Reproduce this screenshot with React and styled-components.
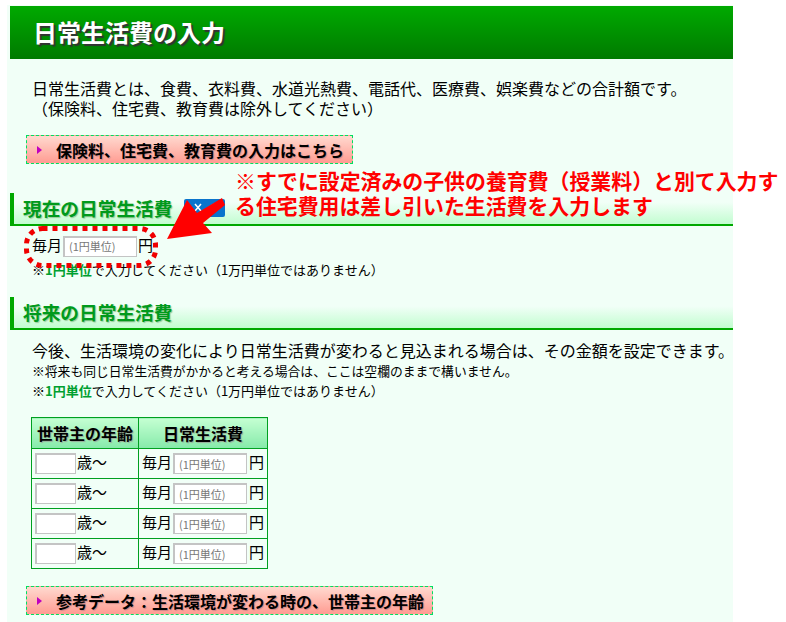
import styled, { createGlobalStyle } from 'styled-components'

const GlobalStyle = createGlobalStyle`
  html, body {
    margin: 0;
    padding: 0;
    height: 622px;
    overflow: hidden;
    background: #fff;
  }
  body {
    font-family: "Noto Sans CJK JP", "Liberation Sans", sans-serif;
    color: #000;
  }
`

const Panel = styled.div`
  position: relative;
  width: 726px;
  height: 617px;
  margin: 5px 0 0 7px;
  padding-top: 1px;
  box-sizing: border-box;
  background: #f1fff7;
  overflow: visible;
`

const Title = styled.h1`
  margin: 0 0 0 3px;
  height: 53px;
  padding-left: 23px;
  font-size: 24px;
  line-height: 52px;
  font-weight: 700;
  color: #fff;
  text-shadow: 2px 2px 1px #333;
  background: linear-gradient(#00aa00, #007a00);
`

const Intro = styled.p`
  margin: 19px 0 0 25px;
  font-size: 16px;
  line-height: 20px;
`

const LinkButton = styled.a`
  display: flex;
  align-items: center;
  box-sizing: border-box;
  width: ${props => props.$width}px;
  height: ${props => props.$height}px;
  margin: ${props => props.$top}px 0 0 19px;
  padding-left: 10px;
  border: 1px dashed #00e060;
  background: linear-gradient(#ffd9cf, #ff9c92);
  font-size: 16px;
  font-weight: 700;
  text-shadow: 1px 1px 1px #c88;
  white-space: nowrap;
`

const Marker = styled.span`
  width: 0;
  height: 0;
  margin-right: 14px;
  border-left: 5px solid #c000c0;
  border-top: 4px solid transparent;
  border-bottom: 4px solid transparent;
`

const SectionHead = styled.h3`
  display: flex;
  align-items: center;
  box-sizing: border-box;
  height: 33px;
  margin: ${props => props.$top}px 0 0 3px;
  padding: 0 0 2px 9px;
  border-left: 4px solid #00a800;
  border-bottom: 2px solid #00a800;
  background: linear-gradient(#f1fff7 30%, #c2fdd0);
  color: #009a1c;
  font-size: 18.7px;
  font-weight: 700;
  text-shadow: 1px 1px 1px #9c9;
`

const HelpBadge = styled.svg`
  width: 41px;
  height: 18px;
  margin-left: 11px;
`

const AmountRow = styled.div`
  display: flex;
  align-items: center;
  height: 22px;
  margin: 9px 0 0 25px;
  font-size: 15px;
`

const Unit = styled.span`
  line-height: 18px;
  padding-bottom: ${props => props.$lift}px;
`

const AmountInput = styled.input`
  box-sizing: border-box;
  width: ${props => props.$width}px;
  height: 21px;
  margin: 0 ${props => props.$gap}px 0 1px;
  padding: 0 4px 1px;
  border: 1px solid #c4c4c4;
  border-width: 2px 1px 1px 2px;
  background: #fff;
  font-family: inherit;
  font-size: 11px;

  &::placeholder {
    color: #777;
    opacity: 1;
  }
`

const Note = styled.p`
  margin: ${props => props.$top}px 0 0 25px;
  font-size: ${props => props.$size}px;
  line-height: 16px;
  white-space: nowrap;
`

const Strong = styled.b`
  color: #00a030;
`

const Lead = styled.p`
  margin: 10px 0 0 25px;
  font-size: 16px;
  line-height: 20px;
  white-space: nowrap;
`

const AgeTable = styled.table`
  width: 236px;
  margin: 18px 0 0 24px;
  border-collapse: collapse;
  table-layout: fixed;
  font-size: 15px;
`

const HeadCell = styled.th`
  height: 30px;
  padding: 0;
  border: 1px solid #00a020;
  background: linear-gradient(#c4ffd2, #86eaaa);
  font-size: 16px;
  font-weight: 700;
  text-shadow: 1px 1px 1px #9a9;
`

const Cell = styled.td`
  height: 29px;
  padding: 0 0 0 3px;
  border: 1px solid #00a020;
  white-space: nowrap;
`

const CellInner = styled.div`
  display: flex;
  align-items: center;
  height: 24px;
`

const AgeInput = styled(AmountInput)`
  margin: 0 1px 0 0;
`

const Annotation = styled.div`
  position: absolute;
  left: 228px;
  top: 163px;
  width: 550px;
  color: #ff0000;
  font-size: 20.9px;
  font-weight: 700;
  line-height: 25px;
  white-space: nowrap;
`

const DottedRing = styled.svg`
  position: absolute;
  left: 17px;
  top: 221px;
  width: 134px;
  height: 42px;
  pointer-events: none;
`

const Arrow = styled.svg`
  position: absolute;
  left: 153px;
  top: 190px;
  width: 70px;
  height: 50px;
`

const ages = [0, 1, 2, 3]

export default function App() {
  return (
    <>
      <GlobalStyle />
      <Panel>
        <Title>日常生活費の入力</Title>
        <Intro>
          日常生活費とは、食費、衣料費、水道光熱費、電話代、医療費、娯楽費などの合計額です。
          <br />
          （保険料、住宅費、教育費は除外してください）
        </Intro>
        <LinkButton $width={327} $height={29} $top={17}>
          <Marker />
          保険料、住宅費、教育費の入力はこちら
        </LinkButton>

        <SectionHead $top={29}>
          現在の日常生活費
          <HelpBadge viewBox="0 0 41 18">
            <rect width="41" height="18" rx="2" fill="#0a74cc" />
            <path d="M11 5l6 7M17 5l-6 7M30 5l-6 4 6 4" stroke="#fff" strokeWidth="1.5" fill="none" />
          </HelpBadge>
        </SectionHead>
        <AmountRow>
          <Unit $lift={2}>毎月</Unit>
          <AmountInput $width={74} $gap={1} placeholder="(1円単位)" />
          <Unit $lift={2}>円</Unit>
        </AmountRow>
        <Note $top={5} $size={13}>
          ※<Strong>1円単位</Strong>で入力してください（1万円単位ではありません）
        </Note>

        <SectionHead $top={19}>将来の日常生活費</SectionHead>
        <Lead>今後、生活環境の変化により日常生活費が変わると見込まれる場合は、その金額を設定できます。</Lead>
        <Note $top={3} $size={12.8}>
          ※将来も同じ日常生活費がかかると考える場合は、ここは空欄のままで構いません。
        </Note>
        <Note $top={4} $size={13}>
          ※<Strong>1円単位</Strong>で入力してください（1万円単位ではありません）
        </Note>

        <AgeTable>
          <colgroup>
            <col width="107" />
            <col width="129" />
          </colgroup>
          <thead>
            <tr>
              <HeadCell>世帯主の年齢</HeadCell>
              <HeadCell>日常生活費</HeadCell>
            </tr>
          </thead>
          <tbody>
            {ages.map(i => (
              <tr key={i}>
                <Cell>
                  <CellInner>
                    <AgeInput $width={41} />
                    <Unit $lift={3}>歳〜</Unit>
                  </CellInner>
                </Cell>
                <Cell>
                  <CellInner>
                    <Unit $lift={3}>毎月</Unit>
                    <AmountInput $width={74} $gap={2} placeholder="(1円単位)" />
                    <Unit $lift={3}>円</Unit>
                  </CellInner>
                </Cell>
              </tr>
            ))}
          </tbody>
        </AgeTable>

        <LinkButton $width={407} $height={29} $top={17}>
          <Marker />
          参考データ：生活環境が変わる時の、世帯主の年齢
        </LinkButton>

        <Annotation>
          ※すでに設定済みの子供の養育費（授業料）と別て入力す
          <br />
          る住宅費用は差し引いた生活費を入力します
        </Annotation>
        <DottedRing viewBox="0 0 134 42">
          <rect x="2.5" y="2.5" width="129" height="37" rx="16" fill="none" stroke="#f00000" strokeWidth="5" strokeDasharray="5 5" />
        </DottedRing>
        <Arrow viewBox="0 0 70 50">
          <polygon points="7,44 27,5 37,18 62,3 65,10 43,28 52,38" fill="#ff0000" />
        </Arrow>
      </Panel>
    </>
  )
}
